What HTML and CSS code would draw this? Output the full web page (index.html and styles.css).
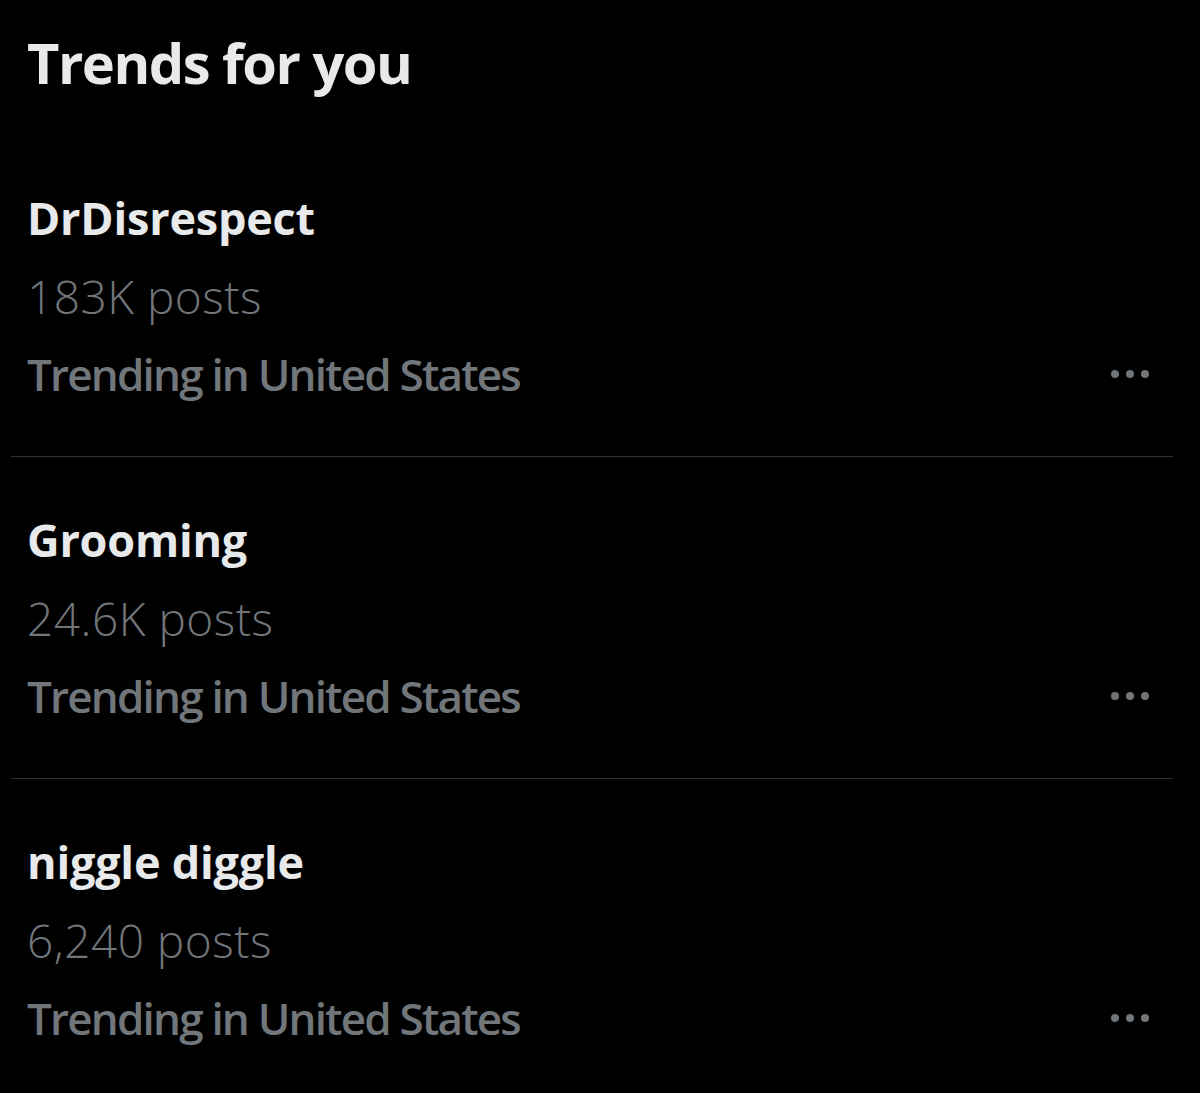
FILE: index.html
```html
<!DOCTYPE html>
<html lang="en">
<head>
    <meta charset="UTF-8">
    <title>Trends for you</title>
    <link rel="stylesheet" href="styles.css">
</head>
<body>

<div class="trends">
    <h2 class="trends-title">Trends for you</h2>

    <div class="trend">
        <div class="trend-name">DrDisrespect</div>
        <div class="trend-count">183K posts</div>
        <div class="trend-meta">
            <span>Trending in United States</span>
            <span class="more"><i></i><i></i><i></i></span>
        </div>
    </div>

    <div class="trend">
        <div class="trend-name">Grooming</div>
        <div class="trend-count">24.6K posts</div>
        <div class="trend-meta">
            <span>Trending in United States</span>
            <span class="more"><i></i><i></i><i></i></span>
        </div>
    </div>

    <div class="trend">
        <div class="trend-name">niggle diggle</div>
        <div class="trend-count">6,240 posts</div>
        <div class="trend-meta">
            <span>Trending in United States</span>
            <span class="more"><i></i><i></i><i></i></span>
        </div>
    </div>
</div>

</body>
</html>
```

FILE: styles.css
```css
body {
    margin: 0;
    background: #000;
    font-family: "Open Sans", "Liberation Sans", sans-serif;
    color: #e7e9ea;
}

.trends {
    width: 1200px;
    height: 1093px;
    overflow: hidden;
}

.trends-title {
    margin: 0;
    padding: 22px 0 0 27px;
    font-size: 56px;
    line-height: 80px;
    font-weight: 700;
    letter-spacing: -1.5px;
}

.trend {
    margin: 0 27px 0 11px;
    padding: 44px 0 43px 16px;
}

.trend:first-of-type {
    padding-top: 77px;
}

.trend + .trend {
    border-top: 1px solid #2f3336;
}

.trend-name {
    font-size: 45px;
    line-height: 78px;
    font-weight: 700;
    letter-spacing: -0.2px;
}

.trend-count {
    font-size: 46px;
    line-height: 78px;
    font-weight: 300;
    letter-spacing: 0.5px;
    color: #71767b;
}

.trend-meta {
    display: flex;
    justify-content: space-between;
    align-items: center;
    font-size: 44px;
    line-height: 78px;
    font-weight: 600;
    letter-spacing: -1.8px;
    color: #71767b;
}

.more {
    display: flex;
    gap: 7px;
    padding-right: 24px;
}

.more i {
    width: 8px;
    height: 8px;
    border-radius: 50%;
    background: #71767b;
}
```
